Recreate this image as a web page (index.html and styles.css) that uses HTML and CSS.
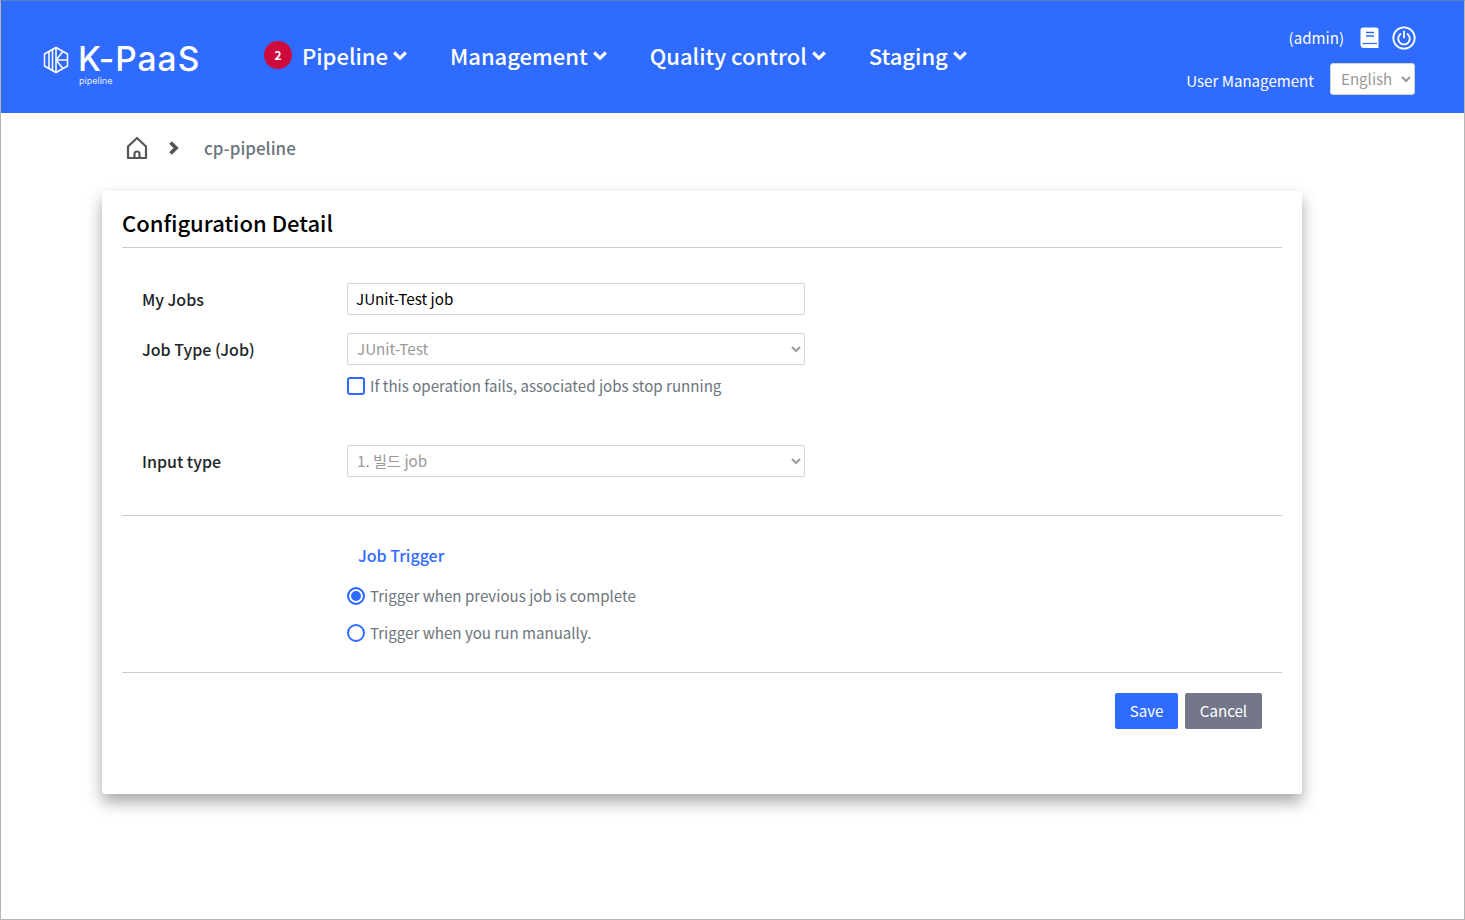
FILE: index.html
```html
<!DOCTYPE html>
<html lang="en">
<head>
<meta charset="utf-8">
<title>Configuration Detail</title>
<link rel="stylesheet" href="styles.css">
</head>
<body>
<div class="frame">
  <header class="topbar">
    <div class="logo">
      <svg class="logo-mark" viewBox="0 0 26 28" width="26" height="28" fill="none" stroke="#fff" stroke-width="1.5" stroke-linejoin="round">
        <path d="M13 1.500 24.500 8v12L13 26.500 1.500 20V8z"/>
        <path d="M6 5.500v17M9.500 3.500v21M13 1.500v25"/>
        <path d="M13 14 20 5.500M13 14l7 8.500M13.500 14h11"/>
      </svg>
      <div class="logo-text">
        <span class="logo-name">K-PaaS</span>
        <span class="logo-sub">pipeline</span>
      </div>
    </div>
    <nav class="nav">
      <div class="nav-item nav-first">
        <span class="badge">2</span>
        <span>Pipeline</span>
        <svg class="chev" viewBox="0 0 14 10" width="14" height="10"><path d="M1.200 1.500 7 7.300l5.800-5.800" fill="none" stroke="#fff" stroke-width="3.200"/></svg>
      </div>
      <div class="nav-item">
        <span>Management</span>
        <svg class="chev" viewBox="0 0 14 10" width="14" height="10"><path d="M1.200 1.500 7 7.300l5.800-5.800" fill="none" stroke="#fff" stroke-width="3.200"/></svg>
      </div>
      <div class="nav-item">
        <span>Quality control</span>
        <svg class="chev" viewBox="0 0 14 10" width="14" height="10"><path d="M1.200 1.500 7 7.300l5.800-5.800" fill="none" stroke="#fff" stroke-width="3.200"/></svg>
      </div>
      <div class="nav-item">
        <span>Staging</span>
        <svg class="chev" viewBox="0 0 14 10" width="14" height="10"><path d="M1.200 1.500 7 7.300l5.800-5.800" fill="none" stroke="#fff" stroke-width="3.200"/></svg>
      </div>
    </nav>
    <div class="util">
      <div class="util-row">
        <span class="util-admin">(admin)</span>
        <svg class="util-book" viewBox="0 0 19 22" width="19" height="22"><path d="M3 .5h13.500a2 2 0 0 1 2 2V21H4a3.500 3.500 0 0 1-3.500-3.500V3A2.500 2.500 0 0 1 3 .5z" fill="#fff"/><path d="M6 5.500h8M6 9h8" stroke="#2f6bff" stroke-width="1.500"/><path d="M2.500 16.500h14.500" stroke="#2f6bff" stroke-width="1.200"/></svg>
        <svg class="util-power" viewBox="0 0 24 24" width="24" height="24" fill="none" stroke="#fff" stroke-width="1.800"><circle cx="12" cy="12" r="10.700"/><path d="M8.500 8a5.800 5.800 0 1 0 7 0" stroke-linecap="round"/><path d="M12 5.500v6" stroke-linecap="round"/></svg>
      </div>
      <div class="util-row util-row-low">
        <span class="util-users">User Management</span>
        <select class="lang"><option>English</option></select>
      </div>
    </div>
  </header>

  <div class="crumbs">
    <svg class="crumb-home" viewBox="0 0 22 24" width="22" height="24" fill="none" stroke="#555" stroke-width="2.200" stroke-linejoin="round"><path d="M2 10.500 11 2l9 8.500V22H2z"/><path d="M8.500 22v-4a2.500 2.500 0 0 1 5 0v4"/></svg>
    <svg class="crumb-sep" viewBox="0 0 10 14" width="10" height="14"><path d="M1.500 1.500 7 7l-5.500 5.500" fill="none" stroke="#555" stroke-width="3.800"/></svg>
    <span class="crumb-page">cp-pipeline</span>
  </div>

  <main class="card">
    <h1 class="card-title">Configuration Detail</h1>
    <section class="form-main">
      <div class="row">
        <label class="row-label">My Jobs</label>
        <input class="field field-text" type="text" value="JUnit-Test job">
      </div>
      <div class="row row-job">
        <label class="row-label">Job Type (Job)</label>
        <div class="row-body">
          <select class="field field-select" disabled><option>JUnit-Test</option></select>
          <label class="check"><span class="check-box"></span><span class="opt-text">If this operation fails, associated jobs stop running</span></label>
        </div>
      </div>
      <div class="row row-input">
        <label class="row-label">Input type</label>
        <select class="field field-select" disabled><option>1. 빌드 job</option></select>
      </div>
    </section>
    <section class="trigger">
      <h2 class="trigger-title">Job Trigger</h2>
      <label class="radio"><span class="radio-dot on"></span><span class="opt-text">Trigger when previous job is complete</span></label>
      <label class="radio"><span class="radio-dot"></span><span class="opt-text">Trigger when you run manually.</span></label>
    </section>
    <div class="actions">
      <button class="btn btn-save">Save</button>
      <button class="btn btn-cancel">Cancel</button>
    </div>
  </main>
</div>
</body>
</html>
```
FILE: styles.css
```css
* { box-sizing: border-box; }
html, body { margin: 0; height: 100%; }
body {
  font-family: "Noto Sans CJK KR", "Noto Sans", sans-serif;
  font-size: 16px;
  color: #212529;
  background: #fff;
}
.frame {
  height: 920px;
  border: 1px solid #b5b5b5;
  border-top-color: #5b7dc4;
  overflow: hidden;
}
.topbar {
  height: 112px;
  background: #2f6bff;
  color: #fff;
  display: flex;
  align-items: center;
  padding: 0 49px 0 42px;
}
.logo { display: flex; align-items: flex-start; align-self: flex-start; width: 221px; padding-top: 42px; }
.logo-mark { margin: 3px 9px 0 0; }
.logo-text { display: flex; flex-direction: column; }
.logo-name { font-family: "Inter", sans-serif; font-size: 33.500px; font-weight: 500; line-height: 33px; letter-spacing: 1px; }
.logo-sub { font-family: "Inter", sans-serif; font-size: 9px; line-height: 9px; margin: 0 0 0 1px; color: #e6edff; }
.nav { display: flex; align-items: center; flex: 1; font-size: 22px; font-weight: 500; margin-top: -4px; }
.nav-item { display: flex; align-items: center; margin-right: 43px; line-height: 30px; }
.chev { margin-left: 5px; margin-top: 1px; }
.badge {
  width: 28px; height: 28px; border-radius: 50%;
  background: #cf0a3c; color: #fff;
  font-size: 12px; font-weight: 700;
  display: flex; align-items: center; justify-content: center;
  margin-right: 10px;
}
.util { display: flex; flex-direction: column; align-items: flex-end; margin-top: 6px; }
.util-row { display: flex; align-items: center; height: 24px; font-size: 15.100px; }
.util-row-low { height: 32px; margin-top: 13px; }
.util-admin { margin: -2px 16px 0 0; }
.util-book { margin-right: 13px; }
.util-power { margin-right: -1px; }
.util-users { margin: 3px 16px 0 0; }
.lang {
  width: 85px; height: 32px;
  border: 1px solid #ced4da; border-radius: 3px;
  background: #fff; color: #999;
  font: inherit; padding: 0 0 2px 6px;
}
.crumbs { display: flex; align-items: center; height: 70px; padding-left: 125px; }
.crumb-home { margin-right: 21px; }
.crumb-sep { margin-right: 25px; }
.crumb-page { font-size: 17px; font-weight: 500; color: #6c757d; margin-top: -1px; }
.card {
  width: 1200px; height: 603px; margin: 8px 0 0 101px;
  padding: 0 20px;
  border-radius: 3px;
  background: #fff;
  box-shadow: 0 8px 16px rgba(0,0,0,.35);
}
.card-title {
  margin: 0; height: 57px;
  border-bottom: 1px solid #ccc;
  font-size: 22px; font-weight: 500; color: #000;
  line-height: 32px; padding-top: 15px;
}
.form-main { height: 268px; padding: 35px 0 0 20px; border-bottom: 1px solid #ccc; }
.row { display: flex; align-items: flex-start; }
.row-job { margin-top: 17px; }
.row-input { margin-top: 47px; }
.row-label { width: 205px; font-size: 16px; font-weight: 500; color: #212529; line-height: 33px; }
.field {
  width: 458px; height: 32px;
  border: 1px solid #ced4da; border-radius: 2px;
  background: #fff; font: inherit; font-size: 15.200px;
}
.field-text { padding: 0 8px 2px; color: #000; outline: none; }
.field-select { padding: 0 0 2px 5px; color: #999; opacity: 1; }
.check { display: flex; align-items: center; margin-top: 9px; height: 24px; font-size: 15.100px; color: #6c757d; }
.check-box { width: 18px; height: 18px; margin-right: 5px; border: 2px solid #2f6bff; border-radius: 3px; }
.opt-text { margin-top: -2px; }
.trigger { height: 157px; padding: 25px 0 0 225px; border-bottom: 1px solid #ccc; }
.trigger-title { margin: 0 0 15px 11px; font-size: 16px; font-weight: 500; color: #2f6bff; line-height: 28px; }
.radio { display: flex; align-items: center; height: 24px; margin-bottom: 13px; font-size: 15.100px; color: #6c757d; }
.radio-dot { width: 18px; height: 18px; margin-right: 5px; border: 2px solid #2f6bff; border-radius: 50%; background: #fff; }
.radio-dot.on { background: #2f6bff; box-shadow: inset 0 0 0 2px #fff; }
.actions { display: flex; justify-content: flex-end; gap: 7px; padding: 20px 20px 0 0; }
.btn { height: 36px; border: 0; border-radius: 2px; color: #fff; font: inherit; font-size: 15.100px; padding: 0 0 2px; }
.btn-save { width: 63px; background: #2f6bff; }
.btn-cancel { width: 77px; background: #737789; }
```
